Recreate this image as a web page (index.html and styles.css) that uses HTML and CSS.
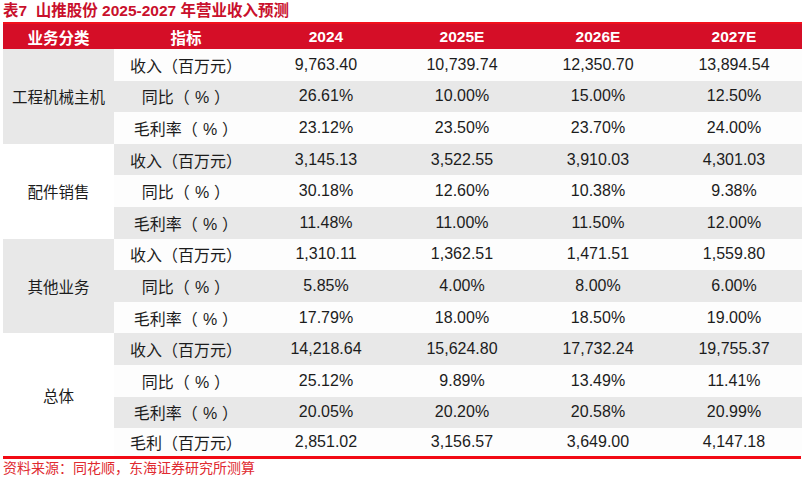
FILE: index.html
```html
<!DOCTYPE html>
<html lang="zh-CN">
<head>
<meta charset="utf-8">
<title>山推股份 2025-2027 年营业收入预测</title>
<link rel="stylesheet" href="styles.css">
</head>
<body>
<div class="page">
  <div class="title">表7&nbsp;&nbsp;山推股份 2025-2027 年营业收入预测</div>
  <table class="fc">
    <colgroup>
      <col class="c-cat"><col class="c-ind"><col class="c-num"><col class="c-num"><col class="c-num"><col class="c-num">
    </colgroup>
    <thead>
      <tr><th>业务分类</th><th>指标</th><th>2024</th><th>2025E</th><th>2026E</th><th>2027E</th></tr>
    </thead>
    <tbody>
      <tr class="w"><td class="cat g" rowspan="3">工程机械主机</td><td>收入（百万元）</td><td>9,763.40</td><td>10,739.74</td><td>12,350.70</td><td>13,894.54</td></tr>
      <tr class="g"><td>同比（<span class="pct">%</span>）</td><td>26.61%</td><td>10.00%</td><td>15.00%</td><td>12.50%</td></tr>
      <tr class="w"><td>毛利率（<span class="pct">%</span>）</td><td>23.12%</td><td>23.50%</td><td>23.70%</td><td>24.00%</td></tr>

      <tr class="g"><td class="cat wc" rowspan="3">配件销售</td><td>收入（百万元）</td><td>3,145.13</td><td>3,522.55</td><td>3,910.03</td><td>4,301.03</td></tr>
      <tr class="w"><td>同比（<span class="pct">%</span>）</td><td>30.18%</td><td>12.60%</td><td>10.38%</td><td>9.38%</td></tr>
      <tr class="g"><td>毛利率（<span class="pct">%</span>）</td><td>11.48%</td><td>11.00%</td><td>11.50%</td><td>12.00%</td></tr>

      <tr class="w"><td class="cat g" rowspan="3">其他业务</td><td>收入（百万元）</td><td>1,310.11</td><td>1,362.51</td><td>1,471.51</td><td>1,559.80</td></tr>
      <tr class="g"><td>同比（<span class="pct">%</span>）</td><td>5.85%</td><td>4.00%</td><td>8.00%</td><td>6.00%</td></tr>
      <tr class="w"><td>毛利率（<span class="pct">%</span>）</td><td>17.79%</td><td>18.00%</td><td>18.50%</td><td>19.00%</td></tr>

      <tr class="g"><td class="cat wc" rowspan="4">总体</td><td>收入（百万元）</td><td>14,218.64</td><td>15,624.80</td><td>17,732.24</td><td>19,755.37</td></tr>
      <tr class="w"><td>同比（<span class="pct">%</span>）</td><td>25.12%</td><td>9.89%</td><td>13.49%</td><td>11.41%</td></tr>
      <tr class="g"><td>毛利率（<span class="pct">%</span>）</td><td>20.05%</td><td>20.20%</td><td>20.58%</td><td>20.99%</td></tr>
      <tr class="w last"><td>毛利（百万元）</td><td>2,851.02</td><td>3,156.57</td><td>3,649.00</td><td>4,147.18</td></tr>
    </tbody>
  </table>
  <div class="rule"></div>
  <div class="source">资料来源：同花顺，东海证券研究所测算</div>
</div>
</body>
</html>
```

FILE: styles.css
```css
html, body {
  margin: 0;
  padding: 0;
  background: #ffffff;
}

body {
  font-family: "Liberation Sans", "Noto Sans CJK SC", Arial, sans-serif;
  color: #1c1c1c;
}

.page {
  width: 798px;
  padding-left: 3px;
}

.title {
  height: 22px;
  line-height: 22px;
  font-size: 15.5px;
  font-weight: bold;
  color: #c9102c;
  white-space: nowrap;
}

.fc {
  width: 798px;
  border-collapse: collapse;
  border-spacing: 0;
  table-layout: fixed;
}

.c-cat { width: 111px; }
.c-ind { width: 144px; }
.c-num { width: 136px; }

.fc th {
  height: 25px;
  padding: 0;
  background: #d50e27;
  color: #ffffff;
  font-size: 15.5px;
  font-weight: bold;
  text-align: center;
  vertical-align: middle;
  border-top: 2px solid #f2101c;
}

.fc td {
  height: 31.6px;
  padding: 0;
  text-align: center;
  vertical-align: middle;
  font-size: 16px;
  white-space: nowrap;
}

.pct {
  margin: 0 5px;
}

.fc tr.last td {
  height: 28px;
}

.fc tr.g td { background: #e8e8e8; }
.fc tr.w td { background: #fdfdfd; }

.fc td.cat { font-size: 15.5px; }
.fc tr td.cat.g { background: #e8e8e8; }
.fc tr td.cat.wc { background: #ffffff; }

.rule {
  height: 3px;
  background: #f20a14;
}

.source {
  height: 22px;
  line-height: 19px;
  font-size: 14px;
  color: #e02a30;
  white-space: nowrap;
}
```
